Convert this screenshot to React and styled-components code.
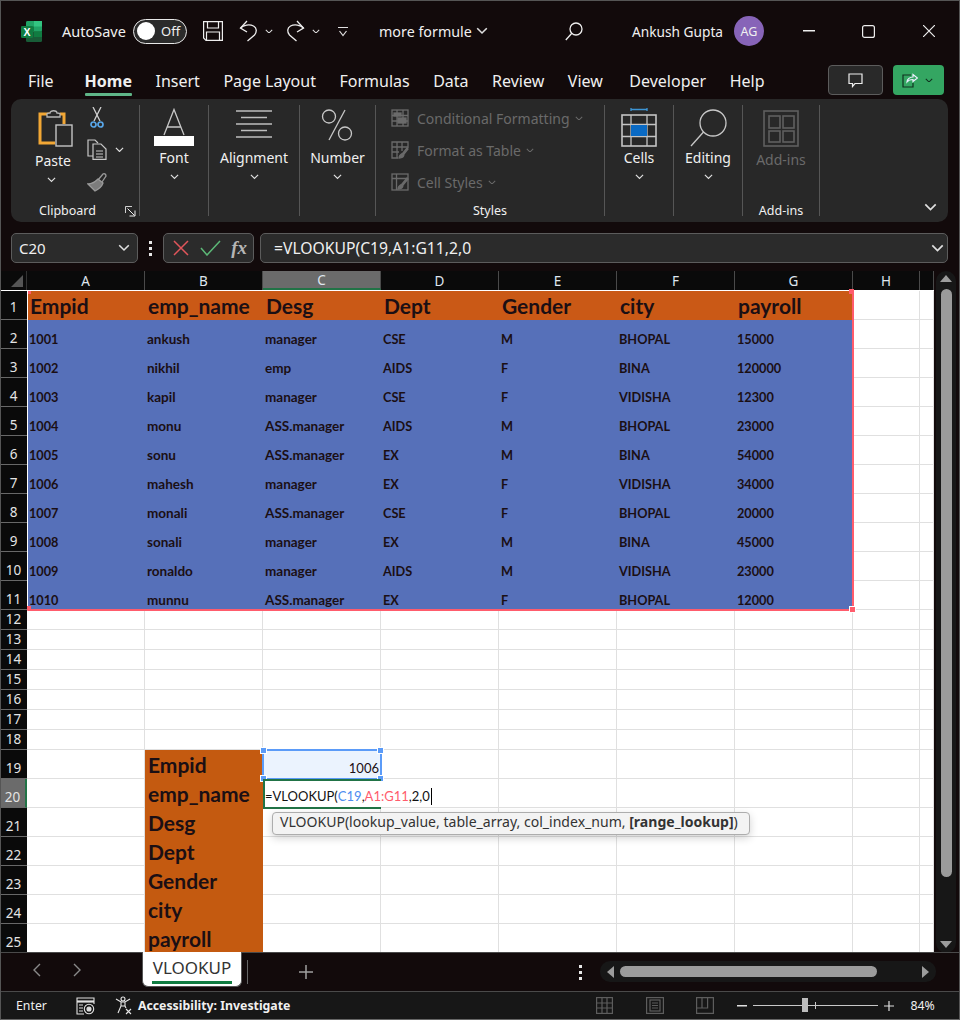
import styled, { createGlobalStyle } from 'styled-components';

const Global = createGlobalStyle`
  html, body { margin: 0; padding: 0; background: #120a0b; }
  * { box-sizing: border-box; }
`;

const Window = styled.div`
  position: relative;
  width: 960px;
  height: 1020px;
  overflow: hidden;
  display: flex;
  flex-direction: column;
  background: #120a0b;
  color: #f0f0f0;
  font-family: "Noto Sans", "Open Sans", sans-serif;

  &::after {
    content: "";
    position: absolute;
    inset: 0;
    border: 1px solid #555;
    border-bottom-color: #666;
    pointer-events: none;
  }
`;

const TitleBar = styled.div`
  height: 62px;
  flex: none;
  display: flex;
  align-items: center;
  font-size: 14.5px;
`;

const TitleSlot = styled.div`
  width: ${p => p.$w}px;
  flex: none;
  display: flex;
  align-items: center;
  padding-left: ${p => p.$pad || 0}px;
  font-size: ${p => p.$size || 14.5}px;
`;

const Toggle = styled.div`
  width: 54px;
  height: 25px;
  border: 1.5px solid #e8e8e8;
  border-radius: 13px;
  background: #2b2b2b;
  display: flex;
  align-items: center;
  gap: 6px;
  padding-left: 3px;
  font-size: 13px;
`;

const Knob = styled.span`
  width: 18px;
  height: 18px;
  border-radius: 50%;
  background: #fff;
`;

const Avatar = styled.div`
  width: 30px;
  height: 30px;
  border-radius: 50%;
  background: #8764b8;
  display: flex;
  align-items: center;
  justify-content: center;
  font-size: 12.5px;
`;

const TabRow = styled.div`
  height: 37px;
  flex: none;
  display: flex;
  align-items: flex-start;
  padding: 3px 16px 0 28px;
`;

const Tabs = styled.div`
  display: flex;
  gap: 23.5px;
  padding-top: 5px;
`;

const Tab = styled.div`
  font-size: 16px;
  line-height: 22px;
  font-weight: ${p => p.$active ? 700 : 400};
  margin-right: ${p => p.$gap || 0}px;

  &::after {
    content: "";
    display: block;
    height: 2.5px;
    margin-top: 1px;
    border-radius: 1px;
    background: ${p => p.$active ? '#5fb587' : 'transparent'};
  }
`;

const TabActions = styled.div`
  margin-left: auto;
  display: flex;
  gap: 10px;
`;

const CommentBtn = styled.div`
  width: 55px;
  height: 30px;
  border: 1px solid #5c5c5c;
  border-radius: 4px;
  background: #292929;
  display: flex;
  align-items: center;
  justify-content: center;
`;

const ShareBtn = styled.div`
  width: 51px;
  height: 30px;
  border-radius: 4px;
  background: #34a662;
  display: flex;
  align-items: center;
  gap: 7px;
  padding-left: 9px;
`;

const Ribbon = styled.div`
  height: 123px;
  flex: none;
  margin: 0 12px 0 11px;
  padding: 6px 0;
  border-radius: 10px;
  background: #282828;
  display: flex;
  position: relative;
`;

const Group = styled.div`
  width: ${p => p.$w}px;
  flex: none;
  height: 111px;
  border-right: 1px solid #565656;
  display: flex;
  flex-direction: column;
  position: relative;
`;

const GroupBody = styled.div`
  flex: 1;
  display: flex;
  justify-content: ${p => p.$start ? 'flex-start' : 'center'};
  padding-left: ${p => p.$pad || 0}px;
`;

const GroupLabel = styled.div`
  height: 16px;
  line-height: 16px;
  margin-bottom: -3px;
  text-align: center;
  font-size: 12.5px;
  color: #f0f0f0;
  padding-right: ${p => p.$shift || 0}px;
`;

const BigButton = styled.div`
  display: flex;
  flex-direction: column;
  align-items: center;
`;

const BigIcon = styled.div`
  height: 42px;
  display: flex;
  align-items: flex-end;
  justify-content: center;
  padding-bottom: ${p => p.$lift || 0}px;
`;

const BigLabel = styled.div`
  height: 22px;
  line-height: 22px;
  font-size: 14px;
  color: ${p => p.$off ? '#6a6a6a' : '#f0f0f0'};
  margin-top: ${p => p.$down || 0}px;
  margin-right: ${p => p.$shift || 0}px;
`;

const ChevronWrap = styled.div`
  height: 14px;
  margin-top: 1px;
  margin-right: ${p => p.$shift || 0}px;
  display: flex;
  align-items: center;
`;

const SmallTools = styled.div`
  display: flex;
  flex-direction: column;
  gap: 11px;
  margin-left: 10px;
  padding-top: 2px;
`;

const ToolRow = styled.div`
  display: flex;
  align-items: center;
  gap: 8px;
  height: 21px;
  padding-left: ${p => p.$pad || 0}px;
`;

const Launcher = styled.div`
  position: absolute;
  right: 3px;
  bottom: 5px;
  width: 11px;
  height: 11px;
`;

const StyleList = styled.div`
  display: flex;
  flex-direction: column;
  gap: 10px;
  padding-top: 2px;
`;

const StyleRow = styled.div`
  display: flex;
  align-items: center;
  gap: 8px;
  height: 22px;
  font-size: 14px;
  color: #6a6a6a;

  svg:last-child {
    margin-left: -3px;
  }
`;

const Collapse = styled.div`
  position: absolute;
  right: 10px;
  bottom: 18px;
  width: 14px;
  height: 10px;
`;

const FormulaRow = styled.div`
  height: 30px;
  flex: none;
  margin: 11px 12px 8px 11px;
  display: flex;
  align-items: stretch;
`;

const FieldBox = styled.div`
  width: ${p => p.$w ? `${p.$w}px` : 'auto'};
  flex: ${p => p.$w ? 'none' : 1};
  border: 1px solid #5c5c5c;
  border-radius: 5px;
  background: #2b2b2b;
  display: flex;
  align-items: center;
  font-size: ${p => p.$size || 15}px;
  padding: ${p => p.$pad || '0 7px'};
  justify-content: space-between;
`;

const GripDots = styled.div`
  width: 25px;
  flex: none;
  display: flex;
  flex-direction: column;
  align-items: center;
  justify-content: center;
  gap: 3px;

  span {
    width: 3px;
    height: 3px;
    background: #e8e8e8;
  }
`;

const FormulaGap = styled.div`
  width: 6px;
  flex: none;
`;

const FxMark = styled.span`
  font-family: "Liberation Serif", serif;
  font-style: italic;
  font-weight: 700;
  font-size: 19px;
  color: #b5b5b5;
`;

const SheetArea = styled.div`
  height: 682px;
  flex: none;
  display: flex;
`;

const Sheet = styled.div`
  position: relative;
  width: 934px;
  flex: none;
  overflow: hidden;
  background: #fff;
`;

const HeaderRow = styled.div`
  display: flex;
  height: 20px;
  background: #0a0a0a;
  border-bottom: 1px solid #fff;
`;

const Corner = styled.div`
  width: 27px;
  flex: none;
  position: relative;
  border-right: 1px solid #333;

  &::after {
    content: "";
    position: absolute;
    right: 3px;
    bottom: 3px;
    border-style: solid;
    border-width: 0 0 12px 12px;
    border-color: transparent transparent #555 transparent;
  }
`;

const ColHead = styled.div`
  width: ${p => p.$w}px;
  flex: none;
  display: flex;
  align-items: center;
  justify-content: center;
  font-size: 13.5px;
  color: #dfe6ee;
  background: ${p => p.$active ? '#6b6b6b' : 'transparent'};
  border-right: 1px solid #4a4a4a;
  border-bottom: ${p => p.$active ? '2px solid #217346' : 'none'};
`;

const Row = styled.div`
  display: flex;
  height: ${p => p.$h}px;
`;

const RowHead = styled.div`
  width: 27px;
  flex: none;
  display: flex;
  align-items: flex-end;
  justify-content: center;
  font-size: 13.5px;
  line-height: 20px;
  padding-bottom: ${p => p.$lift || 0}px;
  color: #e4e4e4;
  background: ${p => p.$active ? '#6b6b6b' : '#0a0a0a'};
  border-bottom: 1px solid #686868;
  border-right: ${p => p.$active ? '2px solid #217346' : '0'};
`;

const Cell = styled.div`
  width: ${p => p.$w}px;
  flex: none;
  display: flex;
  align-items: flex-end;
  justify-content: ${p => p.$right ? 'flex-end' : 'flex-start'};
  overflow: hidden;
  white-space: nowrap;
  background: ${p => p.$fill || '#fff'};
  border-right: ${p => p.$plain ? '0' : '1px solid #e0e0e0'};
  border-bottom: ${p => p.$plain ? '0' : '1px solid #e0e0e0'};
  font-family: Lato, "Liberation Sans", sans-serif;
  color: #1b0f14;
  font-weight: ${p => p.$big || p.$bold ? 700 : 400};
  font-size: ${p => p.$big ? '21px' : p.$tight ? '12.7px' : p.$bold ? '13.5px' : '13px'};
  line-height: ${p => p.$big ? '29px' : '20px'};
  padding: ${p => p.$big ? '0 0 0 3px' : p.$right ? '0 1px 0 0' : '0 0 0 2px'};
`;

const RangeBox = styled.div`
  position: absolute;
  left: ${p => p.$x}px;
  top: ${p => p.$y}px;
  width: ${p => p.$w}px;
  height: ${p => p.$h}px;
  border: 2px solid ${p => p.$color};
  pointer-events: none;
`;

/* the source range keeps white on its top and left edges */
const SourceRange = styled(RangeBox)`
  border-top: 1px solid #fff;
  border-left: 1px solid #fff;
`;

const Handle = styled.span`
  position: absolute;
  width: ${p => p.$size || 7}px;
  height: ${p => p.$size || 7}px;
  background: ${p => p.$color};
  border: ${p => p.$bare ? '0' : '1px solid #fff'};
  ${p => p.$top ? `top: ${p.$at ?? -4}px;` : `bottom: ${p.$at ?? -4}px;`}
  ${p => p.$left ? `left: ${p.$at ?? -4}px;` : `right: ${p.$at ?? -4}px;`}
`;

const EditCell = styled.div`
  position: absolute;
  left: 263px;
  top: 508px;
  width: 118px;
  height: 30px;
  background: #fff;
  border-top: 2px solid #217346;
  border-bottom: 2px solid #217346;
  border-left: 2px solid #217346;
  display: flex;
  align-items: flex-end;
  line-height: 21px;
  white-space: pre;
  font-family: Lato, "Liberation Sans", sans-serif;
  font-size: 13px;
  color: #111;
`;

const RefText = styled.span`
  color: ${p => p.$color};
`;

const Caret = styled.span`
  flex: none;
  width: 1px;
  height: 17px;
  margin: 0 0 2px 1px;
  background: #000;
`;

const FnTooltip = styled.div`
  position: absolute;
  left: 272px;
  top: 541px;
  width: 478px;
  height: 23px;
  border: 1px solid #adadad;
  border-radius: 4px;
  background: #f3f3f3;
  box-shadow: 0 3px 8px rgba(0, 0, 0, 0.18);
  padding-left: 7px;
  font-size: 14.05px;
  line-height: 18px;
  color: #333;
  white-space: nowrap;

  b {
    font-weight: 700;
  }
`;

const VScroll = styled.div`
  width: 20px;
  margin-left: 2px;
  flex: none;
  border-radius: 10px;
  background: #171717;
  display: flex;
  flex-direction: column;
  align-items: center;
  padding: 4px 0 5px;
`;

const Tri = styled.span`
  width: 0;
  height: 0;
  flex: none;
  border-style: solid;
  ${p => p.$dir === 'up' && 'border-width: 0 6px 7px 6px; border-color: transparent transparent #9c9c9c transparent;'}
  ${p => p.$dir === 'down' && 'border-width: 7px 6px 0 6px; border-color: #9c9c9c transparent transparent transparent;'}
  ${p => p.$dir === 'left' && 'border-width: 6px 7px 6px 0; border-color: transparent #9c9c9c transparent transparent;'}
  ${p => p.$dir === 'right' && 'border-width: 6px 0 6px 7px; border-color: transparent transparent transparent #9c9c9c;'}
`;

const VThumb = styled.div`
  width: 11px;
  height: 588px;
  margin: 7px 0 auto;
  border-radius: 6px;
  background: #9b9b9b;
`;

const SheetTabs = styled.div`
  height: 39px;
  flex: none;
  display: flex;
  align-items: flex-start;
  border-top: 1px solid #4a4a4a;
  margin-top: -1px;
  position: relative;
`;

const NavArrows = styled.div`
  width: 142px;
  height: 28px;
  padding-left: 32px;
  flex: none;
  display: flex;
  align-items: center;
  gap: 30px;
  margin-top: 3px;
`;

const SheetTab = styled.div`
  width: 100px;
  height: 35px;
  margin-top: -1px;
  flex: none;
  background: #fff;
  border: 1px solid #555;
  border-top: 0;
  border-radius: 0 0 6px 6px;
  padding: 5px 9px 0;
  font-size: 17px;
  line-height: 22px;
  color: #333;
  text-align: center;
  white-space: nowrap;

  &::after {
    content: "";
    display: block;
    height: 2.5px;
    margin-top: 2px;
    background: #107c41;
  }
`;

const TabDivider = styled.div`
  width: 1px;
  height: 24px;
  margin: 7px 0 0 5px;
  background: #666;
  flex: none;
`;

const AddSheet = styled.div`
  width: 16px;
  margin: 10px 0 0 50px;
  flex: none;
  height: 16px;
`;

const TabDots = styled(GripDots)`
  width: 10px;
  height: 18px;
  margin: 10px 0 0 261px;
`;

const HScroll = styled.div`
  width: 336px;
  height: 21px;
  margin: 8px 0 0 15px;
  flex: none;
  border-radius: 10px;
  background: #171717;
  display: flex;
  align-items: center;
  padding: 0 7px;
`;

const HThumb = styled.div`
  width: 257px;
  height: 11px;
  margin: 0 auto 0 6px;
  border-radius: 6px;
  background: #9b9b9b;
`;

const StatusBar = styled.div`
  height: 28px;
  flex: none;
  border-top: 1px solid #4a4a4a;
  background: #171717;
  display: flex;
  align-items: center;
  font-size: 12.3px;
`;

const StatusSlot = styled.div`
  margin-left: ${p => p.$ml}px;
  display: flex;
  align-items: center;
  flex: none;
  gap: 5px;
  font-weight: ${p => p.$bold ? 700 : 400};
`;

const ZoomTrack = styled.div`
  position: relative;
  width: 125px;
  height: 1px;
  margin-left: 6px;
  background: #c8c8c8;
  flex: none;
`;

const ZoomThumb = styled.span`
  position: absolute;
  left: 49px;
  top: -7px;
  width: 6px;
  height: 14px;
  background: #bdbdbd;
`;

const ZoomTick = styled.span`
  position: absolute;
  left: 62px;
  top: -3px;
  width: 1px;
  height: 7px;
  background: #c8c8c8;
`;

/* drawings */

const Chevron = ({ size = 9, color = '#e0e0e0' }) => (
  <svg width={size} height={size * 0.6} viewBox="0 0 10 6" fill="none" stroke={color} strokeWidth="1.3">
    <path d="M1 1l4 4 4-4" />
  </svg>
);

const ExcelLogo = () => (
  <svg width="21" height="21" viewBox="0 0 21 21">
    <rect x="5" y="0" width="16" height="21" rx="1.5" fill="#185c37" />
    <rect x="5" y="0" width="16" height="10.5" rx="1.5" fill="#21a366" />
    <rect x="13" y="0" width="8" height="5.5" fill="#33c481" />
    <rect x="13" y="10.5" width="8" height="5.5" fill="#107c41" />
    <rect x="5" y="5.5" width="8" height="5" fill="#107c41" />
    <rect x="0" y="5" width="12" height="12" rx="1.2" fill="#107c41" />
    <text x="6" y="14.5" textAnchor="middle" fontSize="10.5" fontWeight="700" fill="#fff" fontFamily="Liberation Sans">X</text>
  </svg>
);

const SaveIcon = () => (
  <svg width="20" height="20" viewBox="0 0 20 20" fill="none" stroke="#eee" strokeWidth="1.2">
    <path d="M.6.6h18.800v18.800H3L.6 17z" />
    <path d="M4.500.6v6.400h11V.6M3.500 19.400v-8.400h13v8.400" />
  </svg>
);

const UndoIcon = ({ flip }) => (
  <svg width="19" height="22" viewBox="0 0 19 22" fill="none" stroke="#eee" strokeWidth="1.3" style={flip ? { transform: 'scaleX(-1)' } : undefined}>
    <path d="M8 1L1.500 8 8 12" />
    <path d="M1.500 8c3-3 9-4 13-2 3.500 2 3.500 6 1 9l-7 6" />
  </svg>
);

const CustomizeIcon = () => (
  <svg width="12" height="11" viewBox="0 0 12 11" fill="none" stroke="#e0e0e0" strokeWidth="1.2">
    <path d="M1 1.500h10M2.500 5l3.500 4.500L9.500 5" />
  </svg>
);

const SearchIcon = () => (
  <svg width="18" height="19" viewBox="0 0 18 19" fill="none" stroke="#eee" strokeWidth="1.3">
    <circle cx="11" cy="7" r="6" />
    <path d="M6.800 11.300L.8 18" />
  </svg>
);

const CommentIcon = () => (
  <svg width="15" height="15" viewBox="0 0 15 15" fill="none" stroke="#eee" strokeWidth="1.2">
    <path d="M1 1h13v9.500H7l-2.500 3v-3H1z" />
  </svg>
);

const ShareIcon = () => (
  <svg width="16" height="16" viewBox="0 0 16 16" fill="none" stroke="#10301f" strokeWidth="1.2">
    <path d="M9 3H1v12h10v-4" />
    <path d="M5 10c0-3 3-5 6-5V2.500L15.500 6 11 9.500V7.500C8.500 7.500 6.500 8 5 10z" stroke="#eef" />
  </svg>
);

const PasteIcon = () => (
  <svg width="35" height="38" viewBox="0 0 35 38">
    <path d="M12 5H2v29h15" fill="none" stroke="#f2a735" strokeWidth="3" />
    <path d="M22 5h4v10" fill="none" stroke="#f2a735" strokeWidth="3" />
    <path d="M9 8V5c0-1 1-1 3-1 0-3 7-3 7 0 2 0 3 0 3 1v3z" fill="#282828" stroke="#b5b5b5" strokeWidth="1.300" />
    <rect x="18" y="16" width="16" height="21" fill="#282828" stroke="#c4c4c4" strokeWidth="1.400" />
  </svg>
);

const CutIcon = () => (
  <svg width="14" height="21" viewBox="0 0 14 21" fill="none" strokeWidth="1.300">
    <path d="M3 0l7 14M11 0L4 14" stroke="#d0d0d0" />
    <circle cx="3.500" cy="17.500" r="2.500" stroke="#58a6e8" strokeWidth="1.700" />
    <circle cx="10.500" cy="17.500" r="2.500" stroke="#58a6e8" strokeWidth="1.700" />
  </svg>
);

const CopyIcon = () => (
  <svg width="20" height="21" viewBox="0 0 20 21" fill="none" stroke="#c8c8c8" strokeWidth="1.200">
    <path d="M6 17H1V1h7l3 3" />
    <path d="M6 5h8l5 5v10.400H6z" />
    <path d="M9 12h7M9 15h7M9 18h7" />
  </svg>
);

const PainterIcon = () => (
  <svg width="21" height="20" viewBox="0 0 21 20" fill="none" stroke="#9a9a9a" strokeWidth="1.300">
    <path d="M11 8l5-6c1-1 3 0 3 2l-4 6" />
    <path d="M11 7l5 4c-1 3-4 6-8 8L1 12c3 0 7-2 10-5z" fill="#7c7c7c" />
  </svg>
);

const LauncherIcon = () => (
  <svg width="11" height="11" viewBox="0 0 11 11" fill="none" stroke="#d0d0d0" strokeWidth="1">
    <path d="M.5 7V.5H7" />
    <path d="M2.500 2.500l7 7M10 4.500V10H4.500" stroke="#eee" />
  </svg>
);

const FontIcon = () => (
  <svg width="40" height="39" viewBox="0 0 40 39">
    <path d="M10 27L20 1.500 30 27M13.500 19h13" fill="none" stroke="#c8c8c8" strokeWidth="1.300" />
    <rect x="0" y="28" width="40" height="10" fill="#fff" />
  </svg>
);

const AlignIcon = () => (
  <svg width="36" height="28" viewBox="0 0 36 28" stroke="#bdbdbd" strokeWidth="1.700">
    <path d="M0 1h36M5 7.500h26M0 14h36M5 20.500h26M0 27h36" />
  </svg>
);

const PercentIcon = () => (
  <svg width="32" height="32" viewBox="0 0 32 32" fill="none" stroke="#c8c8c8" strokeWidth="1.300">
    <circle cx="8" cy="7.500" r="6.500" />
    <circle cx="24" cy="24.500" r="6.500" />
    <path d="M24 1L8 31" />
  </svg>
);

const CondIcon = () => (
  <svg width="18" height="18" viewBox="0 0 18 18" fill="none" stroke="#6a6a6a" strokeWidth="1.300">
    <rect x="1" y="1" width="16" height="16" />
    <path d="M1 6.500h16M1 12h16M6 1v16M12 1v16" />
    <rect x="3" y="4" width="7" height="3" fill="#6a6a6a" />
    <rect x="7" y="9" width="8" height="5" fill="#6a6a6a" />
  </svg>
);

const TableIcon = () => (
  <svg width="18" height="18" viewBox="0 0 18 18" fill="none" stroke="#6a6a6a" strokeWidth="1.300">
    <path d="M17 7V1H1v16h6" />
    <path d="M1 6h16M1 11h7M6 1v16M11 1v9" />
    <path d="M8 17c0-3 2-4 4-5l4-5 1 1-4 5c0 3-2 4-5 4z" fill="#6a6a6a" />
  </svg>
);

const CellStyleIcon = () => (
  <svg width="18" height="18" viewBox="0 0 18 18" fill="none" stroke="#6a6a6a" strokeWidth="1.300">
    <rect x="1" y="1" width="16" height="16" />
    <path d="M1 5.500h16M5.500 1v16" />
    <path d="M7 16c0-3 2-4 4-5l5-6 1 1-5 6c0 3-2 4-5 4z" fill="#6a6a6a" />
  </svg>
);

const CellsIcon = () => (
  <svg width="36" height="39" viewBox="0 0 36 39" fill="none">
    <path d="M10 1.500h16M10 0v3M26 0v3" stroke="#3d95d4" strokeWidth="1.300" />
    <rect x="1" y="7" width="34" height="31" stroke="#c4c4c4" strokeWidth="1.600" />
    <path d="M1 16.500h34M1 28.500h34M10 7v31M26 7v31" stroke="#c4c4c4" strokeWidth="1.300" />
    <rect x="10" y="17" width="16" height="11" fill="#0a6ac4" />
  </svg>
);

const BigSearchIcon = () => (
  <svg width="37" height="38" viewBox="0 0 37 38" fill="none" stroke="#c8c8c8" strokeWidth="1.300">
    <circle cx="23" cy="14" r="13" />
    <path d="M13.500 23L1 37" />
  </svg>
);

const AddInsIcon = () => (
  <svg width="36" height="37" viewBox="0 0 36 37" fill="none" stroke="#5f5f5f" strokeWidth="1.600">
    <rect x="1" y="1" width="34" height="35" />
    <rect x="6" y="6" width="11" height="12" />
    <rect x="20" y="6" width="11" height="12" />
    <rect x="6" y="21" width="11" height="11" />
    <rect x="20" y="21" width="11" height="11" />
  </svg>
);

const MacroIcon = () => (
  <svg width="19" height="18" viewBox="0 0 19 18" fill="none" stroke="#e0e0e0" strokeWidth="1.100">
    <path d="M8 17H1V1h17v6" />
    <path d="M1 4.500h17" strokeWidth="2.200" />
    <path d="M3 8h4M3 11h4M3 14h4" />
    <circle cx="13" cy="12" r="4.700" />
    <circle cx="13" cy="12" r="2" fill="#e0e0e0" />
  </svg>
);

const AccessIcon = () => (
  <svg width="18" height="19" viewBox="0 0 18 19" fill="none" stroke="#e8e8e8" strokeWidth="1.100">
    <circle cx="8" cy="3" r="2" />
    <path d="M1 3l5 3h4l5-3M6 6v4l-3 7M10 6v4l1 2M6 10h4" />
    <path d="M11 13l5 5M16 13l-5 5" />
  </svg>
);

const NormalViewIcon = () => (
  <svg width="17" height="17" viewBox="0 0 17 17" fill="none" stroke="#5d5d5d" strokeWidth="1.200">
    <rect x=".6" y=".6" width="15.800" height="15.800" />
    <path d="M.6 6h15.800M.6 11h15.800M6 .6v15.800M11 .6v15.800" />
  </svg>
);

const PageViewIcon = () => (
  <svg width="18" height="17" viewBox="0 0 18 17" fill="none" stroke="#5d5d5d" strokeWidth="1.200">
    <rect x=".6" y=".6" width="16.800" height="15.800" />
    <rect x="4" y="3" width="10" height="11" />
    <path d="M6 6h6M6 8.500h6M6 11h6" />
  </svg>
);

const BreakViewIcon = () => (
  <svg width="18" height="17" viewBox="0 0 18 17" fill="none" stroke="#5d5d5d" strokeWidth="1.200">
    <path d="M.6.600h16.800v15.800H.6zM.6 11h11V.600M6 .6V11" />
  </svg>
);

/* data */

const columns = [
  { name: 'A', w: 118 },
  { name: 'B', w: 118 },
  { name: 'C', w: 118 },
  { name: 'D', w: 118 },
  { name: 'E', w: 118 },
  { name: 'F', w: 118 },
  { name: 'G', w: 118 },
  { name: 'H', w: 67 },
  { name: '', w: 14 },
];

const tableHead = ['Empid', 'emp_name', 'Desg', 'Dept', 'Gender', 'city', 'payroll'];

const tableRows = [
  ['1001', 'ankush', 'manager', 'CSE', 'M', 'BHOPAL', '15000'],
  ['1002', 'nikhil', 'emp', 'AIDS', 'F', 'BINA', '120000'],
  ['1003', 'kapil', 'manager', 'CSE', 'F', 'VIDISHA', '12300'],
  ['1004', 'monu', 'ASS.manager', 'AIDS', 'M', 'BHOPAL', '23000'],
  ['1005', 'sonu', 'ASS.manager', 'EX', 'M', 'BINA', '54000'],
  ['1006', 'mahesh', 'manager', 'EX', 'F', 'VIDISHA', '34000'],
  ['1007', 'monali', 'ASS.manager', 'CSE', 'F', 'BHOPAL', '20000'],
  ['1008', 'sonali', 'manager', 'EX', 'M', 'BINA', '45000'],
  ['1009', 'ronaldo', 'manager', 'AIDS', 'M', 'VIDISHA', '23000'],
  ['1010', 'munnu', 'ASS.manager', 'EX', 'F', 'BHOPAL', '12000'],
];

const ORANGE = '#ca5916';
const ORANGE_LOW = '#c45a10';
const BLUE = '#5670b9';
const RANGE_RED = '#ff5c6c';
const RANGE_BLUE = '#5b9bf8';

// Lato digits and capitals run wider than the sheet font
const isTight = (value) => /^[A-Z0-9]+$/.test(value);

const renderRow = (num) => {
  const h = num >= 12 && num <= 18 ? 20 : 29;

  return (
    <Row key={num} $h={h}>
      <RowHead $active={num === 20} $lift={num === 1 ? 2 : 0}>{num}</RowHead>
      {columns.map((col, i) => {
        if (num === 1 && i < 7) {
          return <Cell key={i} $w={col.w} $fill={ORANGE} $plain $big>{tableHead[i]}</Cell>;
        }
        if (num >= 2 && num <= 11 && i < 7) {
          const value = tableRows[num - 2][i];
          return <Cell key={i} $w={col.w} $fill={BLUE} $plain $bold $tight={isTight(value)}>{value}</Cell>;
        }
        if (num >= 19 && i === 1) {
          return <Cell key={i} $w={col.w} $fill={ORANGE_LOW} $plain $big>{tableHead[num - 19]}</Cell>;
        }
        if (num === 19 && i === 2) {
          return <Cell key={i} $w={col.w} $fill="#ebf3fe" $right>1006</Cell>;
        }
        return <Cell key={i} $w={col.w} />;
      })}
    </Row>
  );
};

const rowNumbers = Array.from({ length: 25 }, (_, i) => i + 1);

const App = () => {
  return (
    <>
      <Global />
      <Window>
        <TitleBar>
          <TitleSlot $w={62} $pad={21}><ExcelLogo /></TitleSlot>
          <TitleSlot $w={71}>AutoSave</TitleSlot>
          <TitleSlot $w={70}><Toggle><Knob />Off</Toggle></TitleSlot>
          <TitleSlot $w={36}><SaveIcon /></TitleSlot>
          <TitleSlot $w={26}><UndoIcon /></TitleSlot>
          <TitleSlot $w={21}><Chevron size={8} /></TitleSlot>
          <TitleSlot $w={26}><UndoIcon flip /></TitleSlot>
          <TitleSlot $w={25}><Chevron size={8} /></TitleSlot>
          <TitleSlot $w={42}><CustomizeIcon /></TitleSlot>
          <TitleSlot $w={97} $size={14.3}>more formule</TitleSlot>
          <TitleSlot $w={89}><Chevron size={12} /></TitleSlot>
          <TitleSlot $w={67}><SearchIcon /></TitleSlot>
          <TitleSlot $w={102} $size={13.7}>Ankush Gupta</TitleSlot>
          <TitleSlot $w={69}><Avatar>AG</Avatar></TitleSlot>
          <TitleSlot $w={59}>
            <svg width="12" height="2"><rect width="12" height="1.500" fill="#eee" /></svg>
          </TitleSlot>
          <TitleSlot $w={61}>
            <svg width="13" height="13" viewBox="0 0 13 13" fill="none" stroke="#eee" strokeWidth="1.200"><rect x=".6" y=".6" width="11.800" height="11.800" rx="2" /></svg>
          </TitleSlot>
          <TitleSlot $w={20}>
            <svg width="12" height="12" viewBox="0 0 12 12" stroke="#eee" strokeWidth="1.200"><path d="M0 0l12 12M12 0L0 12" /></svg>
          </TitleSlot>
        </TitleBar>

        <TabRow>
          <Tabs>
            <Tab $gap={7.5}>File</Tab>
            <Tab $active>Home</Tab>
            <Tab>Insert</Tab>
            <Tab>Page Layout</Tab>
            <Tab>Formulas</Tab>
            <Tab>Data</Tab>
            <Tab>Review</Tab>
            <Tab $gap={3}>View</Tab>
            <Tab>Developer</Tab>
            <Tab>Help</Tab>
          </Tabs>
          <TabActions>
            <CommentBtn><CommentIcon /></CommentBtn>
            <ShareBtn><ShareIcon /><Chevron size={8} color="#10301f" /></ShareBtn>
          </TabActions>
        </TabRow>

        <Ribbon>
          <Group $w={129}>
            <GroupBody $start $pad={24}>
              <BigButton>
                <BigIcon><PasteIcon /></BigIcon>
                <BigLabel $down={3} $shift={6}>Paste</BigLabel>
                <ChevronWrap $shift={8}><Chevron /></ChevronWrap>
              </BigButton>
              <SmallTools>
                <ToolRow $pad={3}><CutIcon /></ToolRow>
                <ToolRow><CopyIcon /><Chevron /></ToolRow>
                <ToolRow><PainterIcon /></ToolRow>
              </SmallTools>
            </GroupBody>
            <GroupLabel $shift={15}>Clipboard</GroupLabel>
            <Launcher><LauncherIcon /></Launcher>
          </Group>

          <Group $w={69}>
            <GroupBody>
              <BigButton>
                <BigIcon><FontIcon /></BigIcon>
                <BigLabel>Font</BigLabel>
                <ChevronWrap><Chevron /></ChevronWrap>
              </BigButton>
            </GroupBody>
          </Group>

          <Group $w={91}>
            <GroupBody>
              <BigButton>
                <BigIcon $lift={9}><AlignIcon /></BigIcon>
                <BigLabel>Alignment</BigLabel>
                <ChevronWrap><Chevron /></ChevronWrap>
              </BigButton>
            </GroupBody>
          </Group>

          <Group $w={76}>
            <GroupBody>
              <BigButton>
                <BigIcon $lift={6}><PercentIcon /></BigIcon>
                <BigLabel>Number</BigLabel>
                <ChevronWrap><Chevron /></ChevronWrap>
              </BigButton>
            </GroupBody>
          </Group>

          <Group $w={229}>
            <GroupBody $start $pad={15}>
              <StyleList>
                <StyleRow><CondIcon />Conditional Formatting <Chevron size={8} color="#6a6a6a" /></StyleRow>
                <StyleRow><TableIcon />Format as Table <Chevron size={8} color="#6a6a6a" /></StyleRow>
                <StyleRow><CellStyleIcon />Cell Styles <Chevron size={8} color="#6a6a6a" /></StyleRow>
              </StyleList>
            </GroupBody>
            <GroupLabel>Styles</GroupLabel>
          </Group>

          <Group $w={69}>
            <GroupBody>
              <BigButton>
                <BigIcon><CellsIcon /></BigIcon>
                <BigLabel>Cells</BigLabel>
                <ChevronWrap><Chevron /></ChevronWrap>
              </BigButton>
            </GroupBody>
          </Group>

          <Group $w={69}>
            <GroupBody>
              <BigButton>
                <BigIcon><BigSearchIcon /></BigIcon>
                <BigLabel>Editing</BigLabel>
                <ChevronWrap><Chevron /></ChevronWrap>
              </BigButton>
            </GroupBody>
          </Group>

          <Group $w={77}>
            <GroupBody>
              <BigButton>
                <BigIcon><AddInsIcon /></BigIcon>
                <BigLabel $off $down={2}>Add-ins</BigLabel>
              </BigButton>
            </GroupBody>
            <GroupLabel>Add-ins</GroupLabel>
          </Group>

          <Collapse><Chevron size={13} /></Collapse>
        </Ribbon>

        <FormulaRow>
          <FieldBox $w={127}>C20<Chevron size={12} /></FieldBox>
          <GripDots><span /><span /><span /></GripDots>
          <FieldBox $w={91} $pad="0 6px 0 8px">
            <svg width="18" height="18" viewBox="0 0 18 18" stroke="#e0555a" strokeWidth="1.500"><path d="M2 2l14 14M16 2L2 16" /></svg>
            <svg width="21" height="16" viewBox="0 0 21 16" fill="none" stroke="#5cb877" strokeWidth="1.500"><path d="M1 8l6 7L20 1" /></svg>
            <FxMark>fx</FxMark>
          </FieldBox>
          <FormulaGap />
          <FieldBox $pad="0 3px 0 13px" $size={15.7}>
            =VLOOKUP(C19,A1:G11,2,0
            <Chevron size={13} />
          </FieldBox>
        </FormulaRow>

        <SheetArea>
          <Sheet>
            <HeaderRow>
              <Corner />
              {columns.map((col, i) => (
                <ColHead key={i} $w={col.w} $active={col.name === 'C'}>{col.name}</ColHead>
              ))}
            </HeaderRow>
            {rowNumbers.map(renderRow)}

            <SourceRange $x={27} $y={19} $w={827} $h={321} $color={RANGE_RED}>
              <Handle $top $left $at={0} $size={3} $bare $color={RANGE_RED} />
              <Handle $top $at={-2} $size={5} $bare $color={RANGE_RED} />
              <Handle $left $at={-1} $size={4} $bare $color={RANGE_RED} />
              <Handle $color={RANGE_RED} />
            </SourceRange>

            <RangeBox $x={262} $y={478} $w={120} $h={31} $color={RANGE_BLUE}>
              <Handle $top $left $color={RANGE_BLUE} />
              <Handle $top $color={RANGE_BLUE} />
              <Handle $left $color={RANGE_BLUE} />
              <Handle $color={RANGE_BLUE} />
            </RangeBox>

            <EditCell>
              =VLOOKUP(<RefText $color="#4d8df0">C19</RefText>,<RefText $color="#ff5c6c">A1:G11</RefText>,2,0<Caret />
            </EditCell>

            <FnTooltip>VLOOKUP(lookup_value, table_array, col_index_num, <b>[range_lookup]</b>)</FnTooltip>
          </Sheet>
          <VScroll>
            <Tri $dir="up" />
            <VThumb />
            <Tri $dir="down" />
          </VScroll>
        </SheetArea>

        <SheetTabs>
          <NavArrows>
            <svg width="10" height="14" viewBox="0 0 10 14" fill="none" stroke="#8a8a8a" strokeWidth="1.400"><path d="M8 1L2 7l6 6" /></svg>
            <svg width="10" height="14" viewBox="0 0 10 14" fill="none" stroke="#8a8a8a" strokeWidth="1.400"><path d="M2 1l6 6-6 6" /></svg>
          </NavArrows>
          <SheetTab>VLOOKUP</SheetTab>
          <TabDivider />
          <AddSheet>
            <svg width="16" height="16" viewBox="0 0 16 16" stroke="#a0a0a0" strokeWidth="1.500"><path d="M8 1v14M1 8h14" /></svg>
          </AddSheet>
          <TabDots><span /><span /><span /></TabDots>
          <HScroll>
            <Tri $dir="left" />
            <HThumb />
            <Tri $dir="right" />
          </HScroll>
        </SheetTabs>

        <StatusBar>
          <StatusSlot $ml={16}>Enter</StatusSlot>
          <StatusSlot $ml={29}><MacroIcon /></StatusSlot>
          <StatusSlot $ml={20} $bold><AccessIcon />Accessibility: Investigate</StatusSlot>
          <StatusSlot $ml={306}><NormalViewIcon /></StatusSlot>
          <StatusSlot $ml={33}><PageViewIcon /></StatusSlot>
          <StatusSlot $ml={32}><BreakViewIcon /></StatusSlot>
          <StatusSlot $ml={23}>
            <svg width="10" height="2"><rect width="10" height="1.500" fill="#e0e0e0" /></svg>
          </StatusSlot>
          <ZoomTrack><ZoomThumb /><ZoomTick /></ZoomTrack>
          <StatusSlot $ml={6}>
            <svg width="10" height="10" viewBox="0 0 10 10" stroke="#e0e0e0" strokeWidth="1.200"><path d="M5 0v10M0 5h10" /></svg>
          </StatusSlot>
          <StatusSlot $ml={16}>84%</StatusSlot>
        </StatusBar>
      </Window>
    </>
  );
};

export default App;
